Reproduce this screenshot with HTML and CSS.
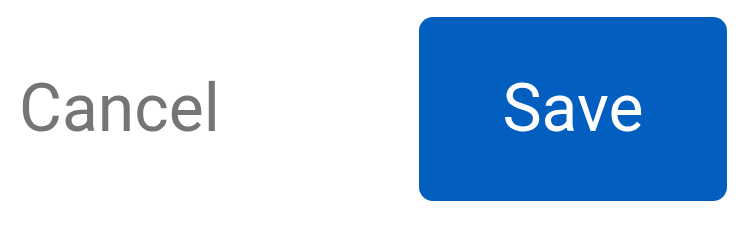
FILE: index.html
```html
<!DOCTYPE html>
<html>
<head>
<meta charset="utf-8">
<link rel="stylesheet" href="styles.css">
</head>
<body>
<div class="actions">
  <button class="btn btn-cancel">Cancel</button>
  <button class="btn btn-save">Save</button>
</div>
</body>
</html>
```
FILE: styles.css
```css
html, body {
  margin: 0;
  padding: 0;
  background: #ffffff;
}
.actions {
  display: flex;
  align-items: center;
  padding: 17px 0 0 0;
  height: 184px;
}
.btn {
  font-family: Roboto, "Noto Sans", sans-serif;
  font-size: 66px;
  font-weight: 400;
  border: none;
  cursor: pointer;
  padding: 0;
  line-height: 1;
}
.btn-cancel {
  background: transparent;
  color: #757575;
  width: 419px;
  height: 184px;
  text-align: left;
  padding-left: 19px;
}
.btn-save {
  background: #035fbf;
  color: #ffffff;
  width: 308px;
  height: 184px;
  border-radius: 14px;
}
```
